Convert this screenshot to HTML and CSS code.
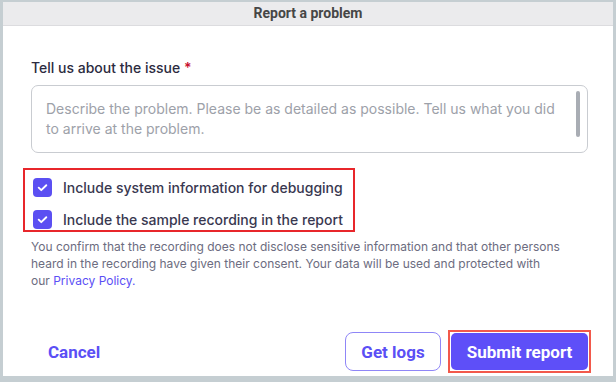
FILE: index.html
```html
<!DOCTYPE html>
<html>
<head>
<meta charset="utf-8">
<link rel="stylesheet" href="styles.css">
</head>
<body>
<div class="window">
  <div class="titlebar">Report a problem</div>
  <div class="content">
    <div class="label">Tell us about the issue <span class="req">*</span></div>
    <div class="textarea">
      <div class="placeholder">Describe the problem. Please be as detailed as possible. Tell us what you did to arrive at the problem.</div>
      <div class="thumb"></div>
    </div>
    <div class="checks">
      <div class="check-row">
        <span class="cb"><svg viewBox="0 0 20 20" width="19" height="19"><path d="M6 10.2l2.7 2.6L14 7.6" fill="none" stroke="#fff" stroke-width="2" stroke-linecap="round" stroke-linejoin="round"/></svg></span>
        <span class="check-text">Include system information for debugging</span>
      </div>
      <div class="check-row">
        <span class="cb"><svg viewBox="0 0 20 20" width="19" height="19"><path d="M6 10.2l2.7 2.6L14 7.6" fill="none" stroke="#fff" stroke-width="2" stroke-linecap="round" stroke-linejoin="round"/></svg></span>
        <span class="check-text">Include the sample recording in the report</span>
      </div>
    </div>
    <p class="note">You confirm that the recording does not disclose sensitive information and that other persons<br>heard in the recording have given their consent. Your data will be used and protected with<br>our <a class="link">Privacy Policy.</a></p>
  </div>
  <div class="footer">
    <button class="btn-cancel">Cancel</button>
    <div class="right">
      <button class="btn-outline">Get logs</button>
      <span class="focus-ring"><button class="btn-primary">Submit report</button></span>
    </div>
  </div>
</div>
</body>
</html>
```
FILE: styles.css
```css
html, body {
  margin: 0;
  padding: 0;
}
body {
  background: #c5ced2;
  width: 616px;
  height: 382px;
  overflow: hidden;
}
.window {
  margin: 2px 3px 0 3px;
  height: 374px;
  background: #fff;
  display: flex;
  flex-direction: column;
}
.titlebar {
  height: 23px;
  line-height: 22px;
  background: #ebebed;
  border-bottom: 1px solid #dcdcdf;
  text-align: center;
  font-family: Roboto, "Liberation Sans", sans-serif;
  font-weight: 700;
  font-size: 14px;
  color: #464646;
}
.content {
  padding: 32px 25px 0 28px;
  font-family: Inter, "Noto Sans", sans-serif;
  flex: 1;
}
.label {
  font-size: 14px;
  font-weight: 500;
  line-height: 20px;
  color: #2c2b40;
}
.req {
  color: #c8102e;
  font-weight: 600;
}
.textarea {
  position: relative;
  margin-top: 7px;
  height: 53px;
  border: 1px solid #c9ccd1;
  border-radius: 7px;
  padding: 13px 24px 0 14px;
}
.placeholder {
  font-size: 14px;
  line-height: 20px;
  color: #9da1a9;
}
.thumb {
  position: absolute;
  right: 7px;
  top: 5px;
  width: 4px;
  height: 46px;
  border-radius: 2px;
  background: #a9adb4;
}
.checks {
  margin-top: 15px;
  margin-left: -8px;
  display: inline-flex;
  flex-direction: column;
  gap: 13px;
  border: 2px solid #e8262b;
  padding: 8px 10px 1px 8px;
}
.check-row {
  display: flex;
  align-items: center;
  gap: 11px;
  height: 19px;
}
.cb {
  width: 19px;
  height: 19px;
  border-radius: 4px;
  background: #5b4ff2;
  display: flex;
}
.check-text {
  font-size: 14px;
  font-weight: 500;
  color: #393850;
}
.note {
  margin: 6px 0 0 0;
  font-size: 12px;
  line-height: 17px;
  color: #6c6c80;
  white-space: nowrap;
}
.link {
  color: #5b4ff5;
}
.footer {
  display: flex;
  align-items: center;
  justify-content: space-between;
  padding: 0 22px 3px 41px;
  font-family: Roboto, "Liberation Sans", sans-serif;
}
.right {
  display: flex;
  align-items: center;
  gap: 7px;
}
button {
  font-family: Roboto, "Liberation Sans", sans-serif;
  font-weight: 700;
  font-size: 17px;
  cursor: pointer;
}
.btn-cancel {
  background: none;
  border: none;
  color: #5b4ff5;
  padding: 0 4px;
  height: 38px;
}
.btn-outline {
  height: 39px;
  width: 96px;
  background: #fff;
  border: 1px solid #8f86f7;
  border-radius: 8px;
  color: #5b4ff5;
  padding: 0;
}
.focus-ring {
  display: flex;
  border: 2px solid #f2594b;
  padding: 1px;
}
.btn-primary {
  height: 37px;
  width: 137px;
  background: #5e4ff8;
  border: none;
  border-radius: 5px;
  color: #fff;
  padding: 0;
}
```
